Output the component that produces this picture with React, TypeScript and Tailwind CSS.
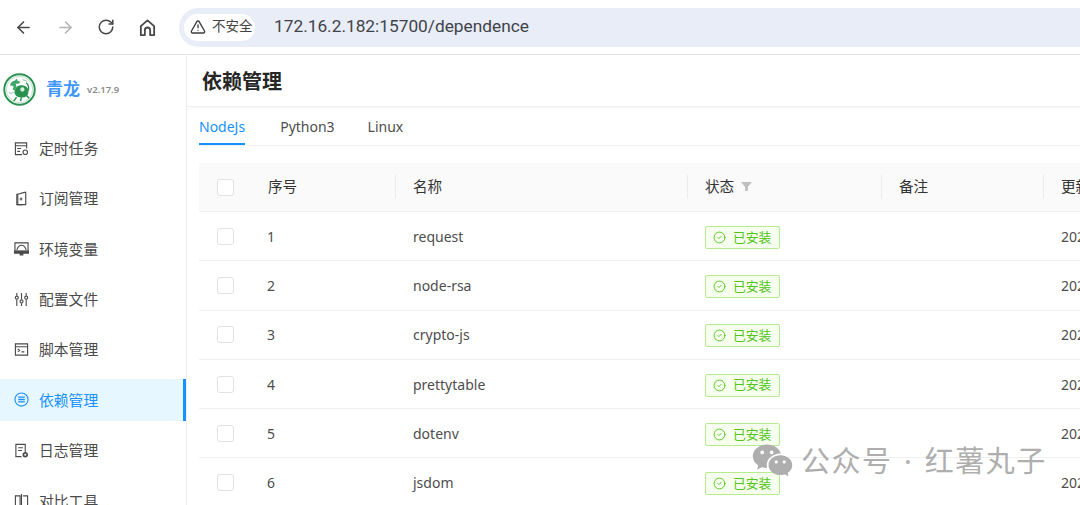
import { ArrowLeft, ArrowRight, RotateCw, TriangleAlert, CircleCheck } from "lucide-react";
import { RiWechatFill } from "react-icons/ri";
import type { ReactNode } from "react";

const FONT = "font-['Noto_Sans','Noto_Sans_CJK_SC',sans-serif]";

function MenuIcon({ children }: { children: ReactNode }) {
  return (
    <svg viewBox="0 0 16 16" fill="none" stroke="currentColor" strokeWidth="1.2" className="h-[15px] w-[15px] shrink-0">
      {children}
    </svg>
  );
}

const MENU = [
  {
    label: "定时任务",
    icon: (
      <MenuIcon>
        <path d="M13.5 8V2H1.5v12.5h7" />
        <path d="M1.5 5h12M3.5 8h4M3.5 11h3" />
        <circle cx="12" cy="12" r="2.4" />
      </MenuIcon>
    ),
  },
  {
    label: "订阅管理",
    icon: (
      <MenuIcon>
        <path d="M4 3.5 11 1.5h1.5v13H4z" />
        <path d="M4 3.5H3v11h6M7.5 7v3M6 8.5h3" />
      </MenuIcon>
    ),
  },
  {
    label: "环境变量",
    icon: (
      <MenuIcon>
        <path d="M1 2h14v9H1z" />
        <path d="M3 9.5c1-3 2.5-5 5-5s4 2 5 5" />
        <path d="M1 11h14v1.5H1zM6 14.5h4" strokeWidth="2" />
      </MenuIcon>
    ),
  },
  {
    label: "配置文件",
    icon: (
      <MenuIcon>
        <path d="M3 1v3M3 8v7M8 1v7M8 12v3M13 1v3M13 8v7" />
        <circle cx="3" cy="6" r="1.6" />
        <circle cx="8" cy="10" r="1.6" />
        <circle cx="13" cy="6" r="1.6" />
      </MenuIcon>
    ),
  },
  {
    label: "脚本管理",
    icon: (
      <MenuIcon>
        <path d="M1.5 2h13v12h-13zM1.5 5h13" />
        <path d="M4 7.5 6 9l-2 1.5M8 10.5h3" />
      </MenuIcon>
    ),
  },
  {
    label: "依赖管理",
    active: true,
    icon: (
      <MenuIcon>
        <circle cx="8" cy="8" r="7" />
        <path d="M4.5 5.5h7M4.5 8h7M4.5 10.5h7" strokeWidth="1.5" />
      </MenuIcon>
    ),
  },
  {
    label: "日志管理",
    icon: (
      <MenuIcon>
        <path d="M8 14.5H2V1.5h10v8" />
        <path d="M4.5 5h5M4.5 8h4" />
        <circle cx="12" cy="12.5" r="2" strokeWidth="1.8" />
      </MenuIcon>
    ),
  },
  {
    label: "对比工具",
    icon: (
      <MenuIcon>
        <path d="M1.5 3h5v11h-5zM9.5 3h5v11h-5M8 1v14" />
      </MenuIcon>
    ),
  },
];

const ROWS = ["request", "node-rsa", "crypto-js", "prettytable", "dotenv", "jsdom"];

const GRID = "grid grid-cols-[53px_145px_292px_194px_162px_200px] items-center";

function Checkbox() {
  return <span className="block h-[17px] w-[17px] rounded-[3px] border border-[#e2e2e2] bg-white" />;
}

function HeadCell({ children, sep = true }: { children: ReactNode; sep?: boolean }) {
  return (
    <div className="relative flex h-full items-center pb-[1px] pl-4 text-[14.6px]">
      {children}
      {sep && <span className="absolute right-[1px] top-1/2 h-[24px] w-px -translate-y-1/2 bg-[#ececec]" />}
    </div>
  );
}

// qinglong emblem: ring with a small dragon inside
function Logo() {
  return (
    <svg viewBox="0 0 34 34" className="h-[33px] w-[33px] shrink-0">
      <circle cx="17" cy="17" r="15.7" fill="#fff" stroke="#2a9150" strokeWidth="2" />
      <circle cx="17" cy="17" r="13.6" fill="none" stroke="#8ac7a0" strokeWidth="0.6" />
      <path d="M12 18c1-4 5-6 9-5 4 1 6 4 5 8-1 3-4 5-8 4-4 0-7-3-6-7z" fill="#2a9150" />
      <circle cx="20" cy="17" r="2.2" fill="#d9efe0" />
      <path d="M7 13c1-3 3-5 5-5l2-2 1 2 3 1-2 2-3 0 1 3-2 4-2-1 1-3-2-1z" fill="#3ca766" />
      <path d="M14 25l-3 4M19 25l-1 4M24 23l3 3M26 18c1-3 0-6-2-8" fill="none" stroke="#2a9150" strokeWidth="1.5" />
      <path d="M6 20c1 1 3 1 5 0M20 7c2 0 4 1 5 2" fill="none" stroke="#7cc196" strokeWidth="1" />
    </svg>
  );
}

export default function App() {
  return (
    <div className={`relative flex h-[505px] w-[1080px] flex-col overflow-hidden bg-white ${FONT}`}>
      {/* browser chrome */}
      <div className="flex h-[55px] shrink-0 items-center border-b border-[#e3e3e3] bg-white pl-[14px]">
        <ArrowLeft className="h-[19px] w-[19px] text-[#474747]" strokeWidth={2} />
        <ArrowRight className="ml-[23px] h-[19px] w-[19px] text-[#b4b4b4]" strokeWidth={2} />
        <RotateCw className="ml-[22px] h-[18px] w-[18px] text-[#474747]" strokeWidth={2} />
        <svg viewBox="0 0 20 20" fill="none" stroke="#474747" strokeWidth="1.9" className="ml-[23px] h-[19px] w-[19px]">
          <path d="M3 8.5 10 2.5l7 6V18h-4.2v-5.2a2.8 2.8 0 0 0-5.6 0V18H3z" strokeLinejoin="round" />
        </svg>
        <div className="ml-[22px] flex h-[39px] flex-1 items-center rounded-l-full bg-[#e9edf8] pl-[5px]">
          <div className="flex h-[27px] w-[71px] items-center rounded-full bg-white pl-[6px]">
            <TriangleAlert className="h-[16px] w-[16px] text-[#3c3c3c]" strokeWidth={2} />
            <span className="ml-[6px] text-[13.5px] leading-none text-[#444]">不安全</span>
          </div>
          <span className="ml-[19px] font-['Roboto',sans-serif] text-[17.3px] text-[#3f4347]">172.16.2.182:15700/dependence</span>
        </div>
      </div>

      <div className="flex min-h-0 flex-1">
        {/* sidebar */}
        <aside className="w-[187px] shrink-0 border-r border-[#efefef] bg-white">
          <div className="flex h-[68px] items-center pl-[3px]">
            <Logo />
            <span className="ml-[10px] text-[17px] font-bold text-[#3f97fb]">青龙</span>
            <span className="ml-[7px] mt-[3px] text-[9.5px] font-semibold text-[#8a8a8a]">v2.17.9</span>
          </div>
          <nav className="flex flex-col gap-[8.4px] pt-[4px]">
            {MENU.map((item) => (
              <div
                key={item.label}
                className={`flex h-[42px] shrink-0 items-center gap-[10px] pl-[14px] text-[14.8px] ${
                  item.active
                    ? "border-r-[3px] border-[#1890ff] bg-[#e6f7ff] text-[#1890ff]"
                    : "text-[#4a4a4a]"
                }`}
              >
                {item.icon}
                <span>{item.label}</span>
              </div>
            ))}
          </nav>
        </aside>

        {/* main */}
        <main className="min-w-0 flex-1 bg-white">
          <div className="flex h-[52px] items-center border-b border-[#f0f0f0] pl-[15px] pt-[2px] text-[20px] font-bold text-[#262626] shadow-[0_1px_2px_rgba(0,0,0,0.03)]">
            依赖管理
          </div>

          <div className="ml-[12px] flex h-[39px] items-end border-b border-[#f0f0f0] text-[14px] text-[#4d4d4d]">
            <div className="border-b-2 border-[#1890ff] pb-[6px] text-[#1890ff]">NodeJs</div>
            <div className="ml-[35px] pb-[8px]">Python3</div>
            <div className="ml-[33px] pb-[8px]">Linux</div>
          </div>

          <div className="ml-[12px] mt-[17px] text-[14px] text-[#4d4d4d]">
            <div className={`${GRID} h-[49px] border-b border-[#f0f0f0] bg-[#fafafa] text-[#333]`}>
              <div className="flex justify-center">
                <Checkbox />
              </div>
              <HeadCell>序号</HeadCell>
              <HeadCell>名称</HeadCell>
              <HeadCell>
                状态
                <svg viewBox="0 0 12 12" className="ml-[7px] h-[11px] w-[11px] fill-[#bfbfbf]">
                  <path d="M0 1h12L7.5 6.5V11h-3V6.5z" />
                </svg>
              </HeadCell>
              <HeadCell>备注</HeadCell>
              <HeadCell sep={false}>更新时间</HeadCell>
            </div>
            {ROWS.map((name, i) => (
              <div key={name} className={`${GRID} h-[49.3px] border-b border-[#f0f0f0]`}>
                <div className="flex justify-center">
                  <Checkbox />
                </div>
                <div className="pl-[15px]">{i + 1}</div>
                <div className="pl-4">{name}</div>
                <div className="pl-4">
                  <span className="inline-flex h-[23px] w-[75px] translate-y-[1px] items-center rounded-[2px] border border-[#b7eb8f] bg-[#f6ffed] pl-[7px] text-[12.8px] text-[#52c41a]">
                    <CircleCheck className="h-[13px] w-[13px]" strokeWidth={1.7} />
                    <span className="ml-[7px]">已安装</span>
                  </span>
                </div>
                <div />
                <div className="pl-4">2024-01-01</div>
              </div>
            ))}
          </div>
        </main>
      </div>

      {/* watermark */}
      <div className="absolute left-[751px] top-[439px] flex items-center text-[#aeaeae]">
        <RiWechatFill className="h-[43px] w-[43px]" />
        <span className="ml-[7px] text-[29px] leading-none tracking-[1.5px]">
          公众号 <span className="mx-[2.5px]">·</span> 红薯丸子
        </span>
      </div>
    </div>
  );
}
